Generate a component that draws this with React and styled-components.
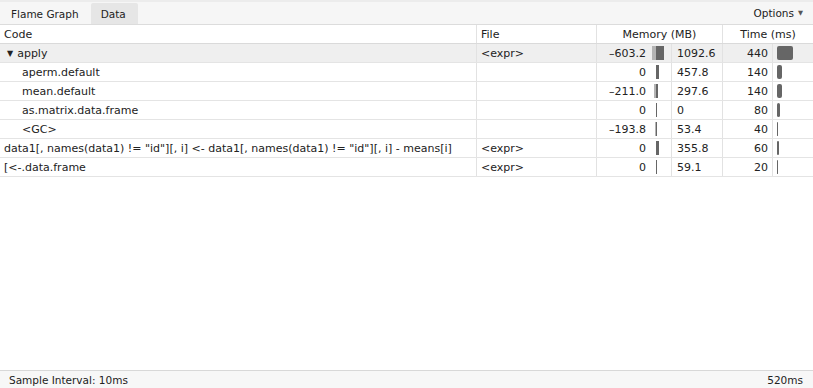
import React from 'react';
import styled, {createGlobalStyle} from 'styled-components';

const GlobalStyle = createGlobalStyle`
  html, body {
    margin: 0;
    padding: 0;
    background: #fff;
  }
  body {
    font-family: "DejaVu Sans", "Lucida Grande", sans-serif;
    font-size: 11px;
    color: #222;
  }
`;

const Page = styled.div`
  width: 813px;
  height: 388px;
  display: flex;
  flex-direction: column;
  overflow: hidden;
`;

const TopStrip = styled.div`
  height: 2px;
  background: #ececec;
`;

const TabBar = styled.div`
  height: 22px;
  display: flex;
  align-items: stretch;
  background: #f6f6f6;
  border-bottom: 1px solid #dcdcdc;
  padding-left: 1px;
  font-size: 10.5px;
`;

const Tab = styled.div`
  display: flex;
  align-items: center;
  padding: 0 12px 0 10px;
  margin-top: 1px;
  background: ${p => (p.$active ? '#e6e6e6' : 'transparent')};
  border-radius: 2px 2px 0 0;
`;

const Options = styled.div`
  margin-left: auto;
  display: flex;
  align-items: center;
  gap: 4px;
  padding-right: 10px;

  span {
    font-size: 6.5px;
    color: #555;
  }
`;

const Table = styled.div`
  flex: 1;
  display: flex;
  flex-direction: column;
`;

const HeaderRow = styled.div`
  display: grid;
  grid-template-columns: 477px 120px 126px 1fr;
  height: 18px;
  border-bottom: 1px solid #dadada;
`;

const HeadCell = styled.div`
  display: flex;
  align-items: center;
  justify-content: ${p => (p.$center ? 'center' : 'flex-start')};
  padding-left: ${p => (p.$center ? '0' : '4px')};
  border-right: ${p => (p.$last ? 'none' : '1px solid #e2e2e2')};
`;

const Row = styled.div`
  display: grid;
  grid-template-columns: 477px 120px 53px 22px 51px 50px 1fr;
  height: 18px;
  border-bottom: 1px solid #e4e4e4;
  background: ${p => (p.$selected ? '#efefef' : '#fff')};
`;

const Cell = styled.div`
  display: flex;
  align-items: center;
  overflow: hidden;
  white-space: nowrap;
  justify-content: ${p => (p.$right ? 'flex-end' : 'flex-start')};
  padding: ${p => (p.$right ? '0 4px 0 0' : `0 0 0 ${p.$indent || 4}px`)};
  border-right: ${p => (p.$sep ? '1px solid #e2e2e2' : 'none')};
`;

const Caret = styled.span`
  font-size: 8px;
  margin-right: 4px;
  margin-left: 3px;
`;

const BarCell = styled.div`
  display: flex;
  align-items: center;
  border-right: ${p => (p.$sep ? '1px solid #e2e2e2' : 'none')};
`;

const NegSide = styled.div`
  width: 6px;
  display: flex;
  justify-content: flex-end;
`;

const MemBar = styled.div`
  height: 14px;
  background: ${p => (p.$neg ? '#b4b4b4' : '#666')};
`;

const TimeBar = styled.div`
  height: 14px;
  margin-left: 4px;
  background: #666;
  border-radius: 2px;
`;

const Spacer = styled.div`
  flex: 1;
`;

const Footer = styled.div`
  height: 17px;
  display: flex;
  align-items: center;
  justify-content: space-between;
  padding: 0 10px 0 9px;
  background: #f7f7f7;
  border-top: 1px solid #d8d8d8;
  font-size: 10.5px;
`;

const rows = [
  {code: 'apply', file: '<expr>', neg: -603.2, pos: 1092.6, time: 440, open: true},
  {code: 'aperm.default', file: '', neg: 0, pos: 457.8, time: 140, child: true},
  {code: 'mean.default', file: '', neg: -211.0, pos: 297.6, time: 140, child: true},
  {code: 'as.matrix.data.frame', file: '', neg: 0, pos: 0, time: 80, child: true},
  {code: '<GC>', file: '', neg: -193.8, pos: 53.4, time: 40, child: true},
  {
    code: 'data1[, names(data1) != "id"][, i] <- data1[, names(data1) != "id"][, i] - means[i]',
    file: '<expr>',
    neg: 0,
    pos: 355.8,
    time: 60
  },
  {code: '[<-.data.frame', file: '<expr>', neg: 0, pos: 59.1, time: 20}
];

const MEM_SCALE = 8 / 1092.6;
const TIME_SCALE = 16 / 440;

const fmtNeg = v => (v === 0 ? '0' : '\u2013' + Math.abs(v).toFixed(1));
const fmtPos = v => (v === 0 ? '0' : v.toFixed(1));

const DataRow = ({r, selected}) => (
  <Row $selected={selected}>
    <Cell $sep $indent={r.child ? 22 : 4}>
      {r.open && <Caret>▼</Caret>}
      {r.code}
    </Cell>
    <Cell $sep>{r.file}</Cell>
    <Cell $right>{fmtNeg(r.neg)}</Cell>
    <BarCell $sep>
      <NegSide>
        {r.neg !== 0 && <MemBar $neg style={{width: Math.abs(r.neg) * MEM_SCALE}}/>}
      </NegSide>
      <MemBar style={{width: Math.max(1, r.pos * MEM_SCALE)}}/>
    </BarCell>
    <Cell $sep $indent={5}>{fmtPos(r.pos)}</Cell>
    <Cell $right $sep>{r.time}</Cell>
    <BarCell>
      <TimeBar style={{width: Math.max(1, r.time * TIME_SCALE)}}/>
    </BarCell>
  </Row>
);

const App = () => (
  <Page>
    <GlobalStyle/>
    <TopStrip/>
    <TabBar>
      <Tab>Flame Graph</Tab>
      <Tab $active>Data</Tab>
      <Options>Options <span>▼</span></Options>
    </TabBar>
    <Table>
      <HeaderRow>
        <HeadCell>Code</HeadCell>
        <HeadCell>File</HeadCell>
        <HeadCell $center>Memory (MB)</HeadCell>
        <HeadCell $center $last>Time (ms)</HeadCell>
      </HeaderRow>
      {rows.map((r, i) => <DataRow key={i} r={r} selected={i === 0}/>)}
      <Spacer/>
    </Table>
    <Footer>
      <span>Sample Interval: 10ms</span>
      <span>520ms</span>
    </Footer>
  </Page>
);

export default App;
